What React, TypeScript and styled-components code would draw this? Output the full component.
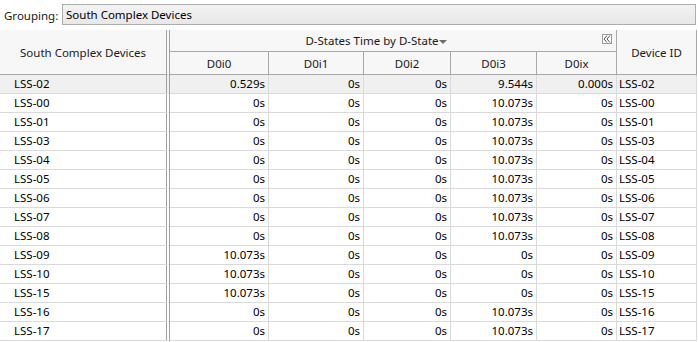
import React, { FC } from 'react';
import styled, { createGlobalStyle } from 'styled-components';

type Row = {
  device: string,
  values: string[],
  selected?: boolean,
};

const rows: Row[] = [
  { device: 'LSS-02', values: ['0.529s', '0s', '0s', '9.544s', '0.000s'], selected: true },
  { device: 'LSS-00', values: ['0s', '0s', '0s', '10.073s', '0s'] },
  { device: 'LSS-01', values: ['0s', '0s', '0s', '10.073s', '0s'] },
  { device: 'LSS-03', values: ['0s', '0s', '0s', '10.073s', '0s'] },
  { device: 'LSS-04', values: ['0s', '0s', '0s', '10.073s', '0s'] },
  { device: 'LSS-05', values: ['0s', '0s', '0s', '10.073s', '0s'] },
  { device: 'LSS-06', values: ['0s', '0s', '0s', '10.073s', '0s'] },
  { device: 'LSS-07', values: ['0s', '0s', '0s', '10.073s', '0s'] },
  { device: 'LSS-08', values: ['0s', '0s', '0s', '10.073s', '0s'] },
  { device: 'LSS-09', values: ['10.073s', '0s', '0s', '0s', '0s'] },
  { device: 'LSS-10', values: ['10.073s', '0s', '0s', '0s', '0s'] },
  { device: 'LSS-15', values: ['10.073s', '0s', '0s', '0s', '0s'] },
  { device: 'LSS-16', values: ['0s', '0s', '0s', '10.073s', '0s'] },
  { device: 'LSS-17', values: ['0s', '0s', '0s', '10.073s', '0s'] },
];

const states = ['D0i0', 'D0i1', 'D0i2', 'D0i3', 'D0ix'];
const widths = [170, 99, 95, 87, 86, 80, 80];

const GlobalStyle = createGlobalStyle`
  body {
    margin: 0;
    background: #fff;
    font-family: "Segoe UI", "Noto Sans", "Open Sans", sans-serif;
    font-size: 11.5px;
    color: #000;
  }
`;

const GroupingBar = styled.div`
  display: flex;
  align-items: center;
  height: 30px;
  padding: 0 2px 0 4px;
  box-sizing: border-box;
`;

const GroupingLabel = styled.span`
  width: 58px;
  color: #1a1a1a;
`;

const GroupingBox = styled.div`
  flex: 1;
  height: 21px;
  margin-top: -1px;
  box-sizing: border-box;
  border: 1px solid #adadad;
  background: linear-gradient(#f2f2f2, #e8e8e8);
  padding: 0 3px;
  line-height: 19px;
`;

const Table = styled.table`
  table-layout: fixed;
  border-collapse: separate;
  border-spacing: 0;
  width: 697px;
`;

const HeadCell = styled.th<{ $first?: boolean, $h?: number }>`
  box-sizing: border-box;
  height: ${(p) => p.$h || 22}px;
  padding: 0 2px;
  font-weight: normal;
  text-align: center;
  color: #1a1a1a;
  background: #f7f7f7;
  border-right: ${(p) => (p.$first ? '4px double #a0a0a0' : '1px solid #a8a8a8')};
  border-bottom: 1px solid #a8a8a8;
  white-space: nowrap;
`;

const GroupTitle = styled.div`
  position: relative;
  display: flex;
  justify-content: center;
  align-items: center;
  padding-right: 34px;
`;

const DropArrow = styled.span`
  display: inline-block;
  width: 0;
  height: 0;
  margin-top: 2px;
  border-left: 4px solid transparent;
  border-right: 4px solid transparent;
  border-top: 4px solid #6e6e6e;
`;

const CollapseButton = styled.span`
  position: absolute;
  right: 2px;
  top: 1px;
  width: 8px;
  height: 8px;
  border: 1px solid #9a9a9a;
  background: #fff;
  display: flex;
  align-items: center;
  justify-content: center;
`;

const Cell = styled.td<{ $first?: boolean, $text?: boolean, $selected?: boolean }>`
  box-sizing: border-box;
  height: 19px;
  padding: ${(p) => (p.$first ? '0 2px 0 14px' : p.$text ? '0 2px 0 2px' : '0 3px 0 2px')};
  text-align: ${(p) => (p.$first || p.$text ? 'left' : 'right')};
  background: ${(p) => (p.$selected ? '#f0f0f0' : '#fff')};
  border-right: ${(p) => (p.$first ? '4px double #a0a0a0' : '1px solid #dadada')};
  border-bottom: 1px solid #dadada;
  white-space: nowrap;
  line-height: 18px;
`;

const App: FC = () => (
  <>
    <GlobalStyle />
    <GroupingBar>
      <GroupingLabel>Grouping:</GroupingLabel>
      <GroupingBox>South Complex Devices</GroupingBox>
    </GroupingBar>
    <Table>
      <colgroup>
        {widths.map((w, i) => <col key={`c${i}`} style={{ width: w }} />)}
      </colgroup>
      <thead>
        <tr>
          <HeadCell $first rowSpan={2}>South Complex Devices</HeadCell>
          <HeadCell colSpan={5}>
            <GroupTitle>
              D-States Time by D-State
              <DropArrow />
              <CollapseButton>
                <svg width="8" height="8" viewBox="0 0 8 8">
                  <path d="M4 0.5 L1 4 L4 7.5 M7 0.5 L4 4 L7 7.5" fill="none" stroke="#555" strokeWidth="1" />
                </svg>
              </CollapseButton>
            </GroupTitle>
          </HeadCell>
          <HeadCell rowSpan={2}>Device ID</HeadCell>
        </tr>
        <tr>
          {states.map((s) => <HeadCell key={s} $h={23}>{s}</HeadCell>)}
        </tr>
      </thead>
      <tbody>
        {rows.map((row) => (
          <tr key={row.device}>
            <Cell $first $selected={row.selected}>{row.device}</Cell>
            {row.values.map((v, i) => (
              <Cell key={states[i]} $selected={row.selected}>{v}</Cell>
            ))}
            <Cell $text $selected={row.selected}>{row.device}</Cell>
          </tr>
        ))}
      </tbody>
    </Table>
  </>
);

export default App;
